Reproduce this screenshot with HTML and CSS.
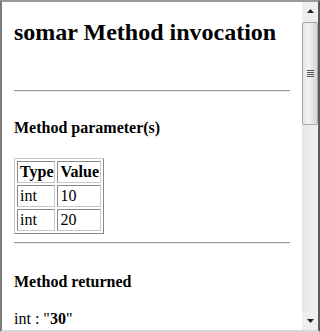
FILE: index.html
```html
<!DOCTYPE html>
<html>
<head>
<meta charset="utf-8">
<link rel="stylesheet" href="styles.css">
</head>
<body>
<div class="window">
  <div class="content">
    <h1 class="title">somar Method invocation</h1>
    <hr class="rule rule-top">
    <h3 class="section section-params">Method parameter(s)</h3>
    <table class="params">
      <tr><th>Type</th><th>Value</th></tr>
      <tr><td>int</td><td>10</td></tr>
      <tr><td>int</td><td>20</td></tr>
    </table>
    <hr class="rule rule-mid">
    <h3 class="section section-return">Method returned</h3>
    <p class="result">int : "<b>30</b>"</p>
  </div>
  <div class="scrollbar">
    <div class="sb-btn sb-up">
      <svg width="7" height="4" viewBox="0 0 7 4"><path d="M3.5 0 L7 4 L0 4 Z" fill="#222"/></svg>
    </div>
    <div class="sb-thumb">
      <div class="grip"><span></span><span></span><span></span><span></span></div>
    </div>
    <div class="sb-track"></div>
    <div class="sb-btn sb-down">
      <svg width="7" height="4" viewBox="0 0 7 4"><path d="M0 0 L7 0 L3.5 4 Z" fill="#222"/></svg>
    </div>
  </div>
</div>
</body>
</html>
```
FILE: styles.css
```css
html, body {
  margin: 0;
  padding: 0;
  background: #ffffff;
}
.window {
  box-sizing: border-box;
  width: 320px;
  height: 332px;
  display: flex;
  border-style: solid;
  border-width: 2px;
  border-top-color: #9a9a9a;
  border-left-color: #7c7c7c;
  border-right-color: #5a5a5a;
  border-bottom-color: #d8d8d8;
  background: #ffffff;
  overflow: hidden;
}
.content {
  width: 300px;
  box-sizing: border-box;
  padding: 16px 12px 0 12px;
  font-family: "Liberation Serif", "Times New Roman", serif;
  color: #000;
  overflow: hidden;
}
.title {
  margin: 0;
  font-size: 24px;
  line-height: 28px;
  font-weight: bold;
}
.rule {
  margin: 0;
  height: 0;
  border: 0;
  border-top: 1px solid #9a9a9a;
  border-bottom: 1px solid #e6e6e6;
}
.rule-top { margin-top: 44px; }
.rule-mid { margin-top: 8px; }
.section {
  margin: 0;
  font-size: 16px;
  line-height: 18px;
  font-weight: bold;
}
.section-params { margin-top: 27px; }
.section-return { margin-top: 29px; }
.params {
  margin-top: 21px;
  border-collapse: separate;
  border-spacing: 2px;
  border: 1px solid;
  border-color: #c8c8c8 #8a8a8a #8a8a8a #c8c8c8;
  font-size: 16px;
  line-height: 18px;
}
.params th, .params td {
  padding: 1px 1px 1px 2px;
  text-align: left;
  border: 1px solid;
  border-color: #8a8a8a #c8c8c8 #c8c8c8 #8a8a8a;
}
.params th { font-weight: bold; }
.params td { font-weight: normal; }
.result {
  margin: 19px 0 0 0;
  font-size: 16px;
  line-height: 18px;
}
.scrollbar {
  width: 16px;
  display: flex;
  flex-direction: column;
  background: #ececec;
}
.sb-btn {
  height: 18px;
  display: flex;
  align-items: center;
  justify-content: center;
  background: #eeeeee;
}
.sb-up { margin-bottom: 2px; }
.sb-thumb {
  height: 103px;
  box-sizing: border-box;
  border: 1px solid #a8a8a8;
  border-radius: 2px;
  background: linear-gradient(to right, #e4e4e4, #f2f2f2 40%, #d6d6d6);
  display: flex;
  align-items: center;
  justify-content: center;
}
.grip {
  display: flex;
  flex-direction: column;
  gap: 1px;
}
.grip span {
  display: block;
  width: 7px;
  height: 1px;
  background: #555;
}
.sb-track {
  flex: 1;
  background: linear-gradient(to right, #e6e6e6, #f0f0f0);
}
```
